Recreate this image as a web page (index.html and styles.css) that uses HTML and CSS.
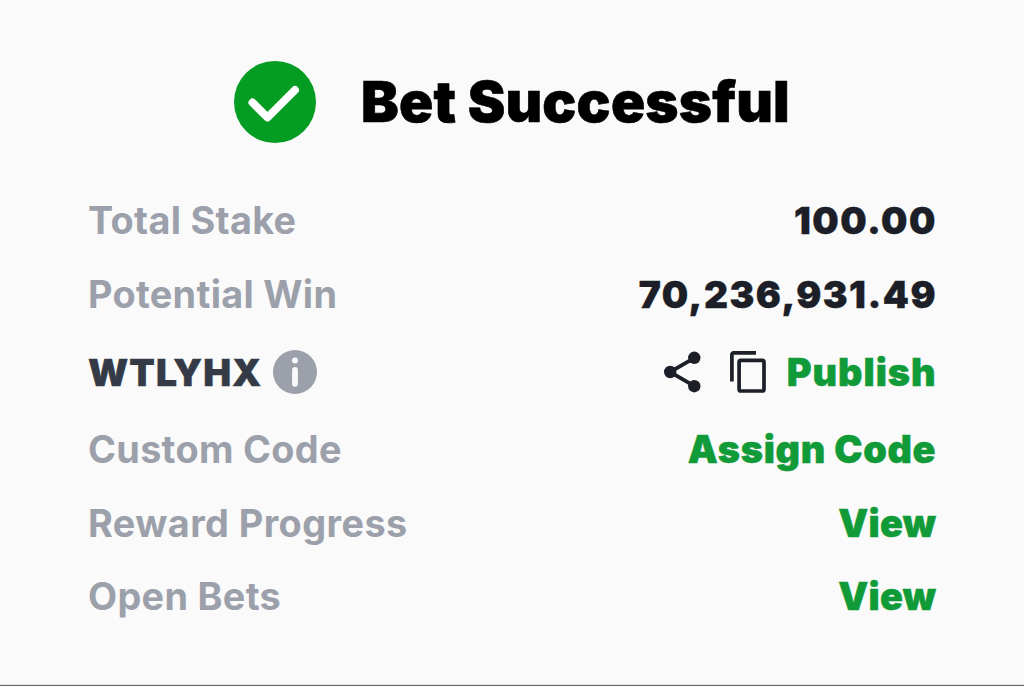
FILE: index.html
```html
<!DOCTYPE html>
<html lang="en">
<head>
<meta charset="utf-8">
<title>Bet Successful</title>
<link rel="stylesheet" href="styles.css">
</head>
<body>
<main class="receipt">
  <header class="header">
    <svg class="check" viewBox="0 0 82 82" aria-hidden="true"><circle cx="41" cy="41" r="41" fill="#049c22"/><path d="M18.500 41.500 33.500 56.500 61 29" fill="none" stroke="#fff" stroke-width="8" stroke-linecap="round" stroke-linejoin="round"/></svg>
    <h1 class="title">Bet Successful</h1>
  </header>
  <section class="rows">
    <div class="row first"><span class="label">Total Stake</span><span class="value">100.00</span></div>
    <div class="row"><span class="label">Potential Win</span><span class="value">70,236,931.49</span></div>
    <div class="row code-row">
      <div class="booking"><span class="code">WTLYHX</span>
        <svg class="info" viewBox="0 0 44 44" aria-hidden="true"><circle cx="22" cy="22" r="22" fill="#9ca0ab"/><circle cx="22" cy="10.600" r="3" fill="#fafafa"/><path d="M22 20v13.800" stroke="#fafafa" stroke-width="5.800" stroke-linecap="round"/></svg>
      </div>
      <div class="actions">
        <svg class="share" viewBox="0 0 37 42" aria-hidden="true"><path d="M30.500 6.800 6 21 30.500 35.200" fill="none" stroke="#1c1e28" stroke-width="3.800"/><g fill="#1c1e28"><circle cx="30.300" cy="6.800" r="6.200"/><circle cx="6.200" cy="21" r="6.200"/><circle cx="30.300" cy="35.200" r="6.200"/></g></svg>
        <svg class="copy" viewBox="0 0 36 42" aria-hidden="true"><g fill="none" stroke="#1c1e28" stroke-width="3.700"><path d="M1.900 30.400V3.800a2 2 0 0 1 2-2H26"/><rect x="9.100" y="9.400" width="24.900" height="30.600" rx="1.800"/></g></svg>
        <span class="link publish">Publish</span>
      </div>
    </div>
    <div class="row custom"><span class="label">Custom Code</span><span class="link">Assign Code</span></div>
    <div class="row"><span class="label reward">Reward Progress</span><span class="link view">View</span></div>
    <div class="row"><span class="label">Open Bets</span><span class="link view">View</span></div>
  </section>
</main>
</body>
</html>
```
FILE: styles.css
```css
* { box-sizing: border-box; }
body { margin: 0; background: #fafafa; font-family: Inter, "Liberation Sans", sans-serif; }
.receipt { height: 686px; padding: 61px 88px 0 88px; border-bottom: 1px solid #606168; box-shadow: inset 0 -1px #e6e6e9; }
.header { display: flex; align-items: center; height: 82px; padding-left: 146px; gap: 45px; }
.check { width: 82px; height: 82px; }
.title { margin: 0; font-size: 56.5px; line-height: 80px; font-weight: 900; color: #000; white-space: nowrap; letter-spacing: 0.2px; -webkit-text-stroke: 0.6px #000; }
.rows { padding-top: 41px; }
.row { display: flex; align-items: center; justify-content: space-between; height: 73.6px; font-size: 37.2px; line-height: 44px; white-space: nowrap; }
.first { height: 74px; }
.code-row { height: 82px; }
.custom { height: 73.2px; }
.label { padding-bottom: 1.6px; font-size: 37.8px; font-weight: 700; color: #9ca0ab; letter-spacing: 0.32px; }
.reward { letter-spacing: 0.45px; }
.value { font-weight: 900; color: #1c1e28; letter-spacing: 1.5px; margin-right: -1px; -webkit-text-stroke: 0.4px #1c1e28; }
.code { font-weight: 900; color: #343a46; letter-spacing: 1.1px; -webkit-text-stroke: 0.4px #343a46; }
.link { padding-bottom: 1.6px; font-size: 37.8px; font-weight: 900; color: #119a38; letter-spacing: 0.7px; margin-right: -0.2px; -webkit-text-stroke: 0.5px #119a38; }
.publish { letter-spacing: 1px; margin-right: -0.6px; }
.view { letter-spacing: 0.2px; margin-right: 0; }
.booking, .actions { display: flex; align-items: center; }
.info { width: 44px; height: 44px; margin: 0 0 1px 10.5px; }
.share { width: 37px; height: 42px; margin: 0 29px 1px 0; }
.copy { width: 36px; height: 42px; margin: 0 20.5px 1px 0; }
```
